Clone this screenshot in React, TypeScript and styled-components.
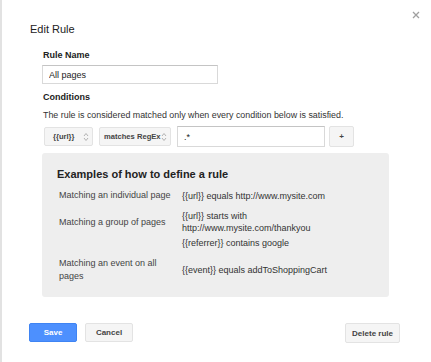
import styled, { createGlobalStyle } from 'styled-components';

const Global = createGlobalStyle`
	html, body {
		margin: 0;
		padding: 0;
		background: #ffffff;
	}
	body {
		font-family: 'Liberation Sans', Arial, sans-serif;
		color: #222;
	}
`;

const examples = [
	{ label: 'Matching an individual page', values: ['{{url}} equals http://www.mysite.com'] },
	{
		label: 'Matching a group of pages',
		values: ['{{url}} starts with http://www.mysite.com/thankyou', '{{referrer}} contains google'],
	},
	{ label: 'Matching an event on all pages', values: ['{{event}} equals addToShoppingCart'] },
];

function Chevrons() {
	return (
		<svg width="6" height="10" viewBox="0 0 6 10">
			<path d="M1 4 L3 1.5 L5 4 M1 6 L3 8.5 L5 6" fill="none" stroke="#aaa" strokeWidth="0.9" />
		</svg>
	);
}

function CloseIcon() {
	return (
		<svg width="8" height="8" viewBox="0 0 8 8">
			<path d="M1 1 L7 7 M7 1 L1 7" stroke="#a0a0a0" strokeWidth="1.3" />
		</svg>
	);
}

export default function App() {
	return (
		<>
			<Global />
			<Page>
				<Dialog>
					<Close>
						<CloseIcon />
					</Close>
					<Title>Edit Rule</Title>
					<Body>
						<Label>Rule Name</Label>
						<NameInput defaultValue="All pages" />
						<Label>Conditions</Label>
						<Hint>The rule is considered matched only when every condition below is satisfied.</Hint>
						<ConditionRow>
							<Select $width={49} $inset={8}>
								{'{{url}}'}
								<Chevrons />
							</Select>
							<Select $width={72} $inset={4}>
								matches RegEx
								<Chevrons />
							</Select>
							<ValueInput defaultValue=".*" />
							<SmallButton>+</SmallButton>
						</ConditionRow>
						<ExampleBox>
							<ExampleTitle>Examples of how to define a rule</ExampleTitle>
							<ExampleList>
								{examples.map((ex) => (
									<ExampleGroup key={ex.label}>
										<ExampleLabel>{ex.label}</ExampleLabel>
										{ex.values.map((v) => (
											<ExampleValue key={v}>{v}</ExampleValue>
										))}
									</ExampleGroup>
								))}
							</ExampleList>
						</ExampleBox>
					</Body>
					<Footer>
						<Button $primary>Save</Button>
						<Button>Cancel</Button>
						<Spacer />
						<Button $wide>Delete rule</Button>
					</Footer>
				</Dialog>
			</Page>
		</>
	);
}

const Page = styled.div`
	width: 431px;
	height: 362px;
	border-left: 2px solid #e2e2e2;
	box-sizing: border-box;
	overflow: hidden;
`;

const Dialog = styled.div`
	position: relative;
	padding: 22px 31px 0 28px;
`;

const Close = styled.div`
	position: absolute;
	top: 11px;
	right: 11px;
	display: flex;
`;

const Title = styled.h1`
	margin: 0;
	font-size: 11px;
	font-weight: normal;
	color: #222;
	line-height: 14px;
`;

const Body = styled.div`
	display: flex;
	flex-direction: column;
	align-items: flex-start;
	padding: 0 0 0 12px;
	margin-top: 13px;
`;

const Label = styled.div`
	font-size: 9px;
	font-weight: bold;
	color: #222;
	line-height: 12px;
	padding-left: 1px;
`;

const NameInput = styled.input`
	box-sizing: border-box;
	width: 176px;
	height: 19px;
	margin: 4px 0 7px;
	padding: 0 6px;
	border: 1px solid #d9d9d9;
	border-top-color: #c4c4c4;
	font-family: 'Liberation Sans', Arial, sans-serif;
	font-size: 9px;
	color: #222;
	outline: none;
`;

const Hint = styled.div`
	margin-top: 6px;
	padding-left: 1px;
	font-size: 8.9px;
	color: #333;
	line-height: 12px;
`;

const ConditionRow = styled.div`
	display: flex;
	align-items: center;
	gap: 6px;
	margin-top: 5px;
	padding-left: 2px;
`;

const Select = styled.div<{ $width: number; $inset: number }>`
	box-sizing: border-box;
	width: ${(p) => p.$width}px;
	height: 19px;
	display: flex;
	align-items: center;
	justify-content: space-between;
	padding: 0 3px 0 ${(p) => p.$inset}px;
	background: #f5f5f5;
	border: 1px solid #e3e3e3;
	border-radius: 2px;
	font-size: 7.6px;
	font-weight: bold;
	color: #444;
	white-space: nowrap;

	svg {
		flex: none;
	}
`;

const ValueInput = styled.input`
	box-sizing: border-box;
	width: 148px;
	height: 21px;
	padding: 0 6px;
	border: 1px solid #d9d9d9;
	border-top-color: #c4c4c4;
	font-family: 'Liberation Sans', Arial, sans-serif;
	font-size: 9px;
	color: #222;
	outline: none;
`;

const SmallButton = styled.div`
	box-sizing: border-box;
	width: 25px;
	height: 21px;
	margin-left: -2px;
	display: flex;
	align-items: center;
	justify-content: center;
	background: #f5f5f5;
	border: 1px solid #e3e3e3;
	border-radius: 2px;
	font-size: 8px;
	font-weight: bold;
	color: #444;
`;

const ExampleBox = styled.div`
	box-sizing: border-box;
	width: 347px;
	height: 144px;
	margin-top: 6px;
	padding: 14px 10px 0 15px;
	background: #eeeeee;
	border-radius: 3px;
`;

const ExampleTitle = styled.div`
	font-size: 11px;
	font-weight: bold;
	color: #222;
	line-height: 14px;
`;

const ExampleList = styled.div`
	display: flex;
	flex-direction: column;
	gap: 8px;
	margin-top: 8px;
	padding-left: 2px;
`;

const ExampleGroup = styled.div`
	display: grid;
	grid-template-columns: 123px 152px;
	row-gap: 3px;
	align-items: center;
`;

const ExampleLabel = styled.div`
	grid-column: 1;
	grid-row: 1;
	max-width: 114px;
	font-size: 9px;
	color: #444;
	line-height: 13px;
`;

const ExampleValue = styled.div`
	grid-column: 2;
	font-size: 9px;
	color: #333;
	line-height: 12px;
`;

const Footer = styled.div`
	display: flex;
	align-items: center;
	gap: 8px;
	margin: 25px 0 0 -1px;
`;

const Spacer = styled.div`
	flex: 1;
`;

const Button = styled.div<{ $primary?: boolean; $wide?: boolean }>`
	box-sizing: border-box;
	min-width: ${(p) => (p.$wide ? 51 : 48)}px;
	height: ${(p) => (p.$wide ? 20 : 19)}px;
	margin-top: ${(p) => (p.$wide ? 1 : 0)}px;
	padding: 0 6px;
	display: flex;
	align-items: center;
	justify-content: center;
	border-radius: 2px;
	font-size: 8px;
	font-weight: bold;
	background: ${(p) => (p.$primary ? '#4d90fe' : '#f5f5f5')};
	border: 1px solid ${(p) => (p.$primary ? '#3f84f3' : '#e3e3e3')};
	color: ${(p) => (p.$primary ? '#ffffff' : '#444')};
`;
